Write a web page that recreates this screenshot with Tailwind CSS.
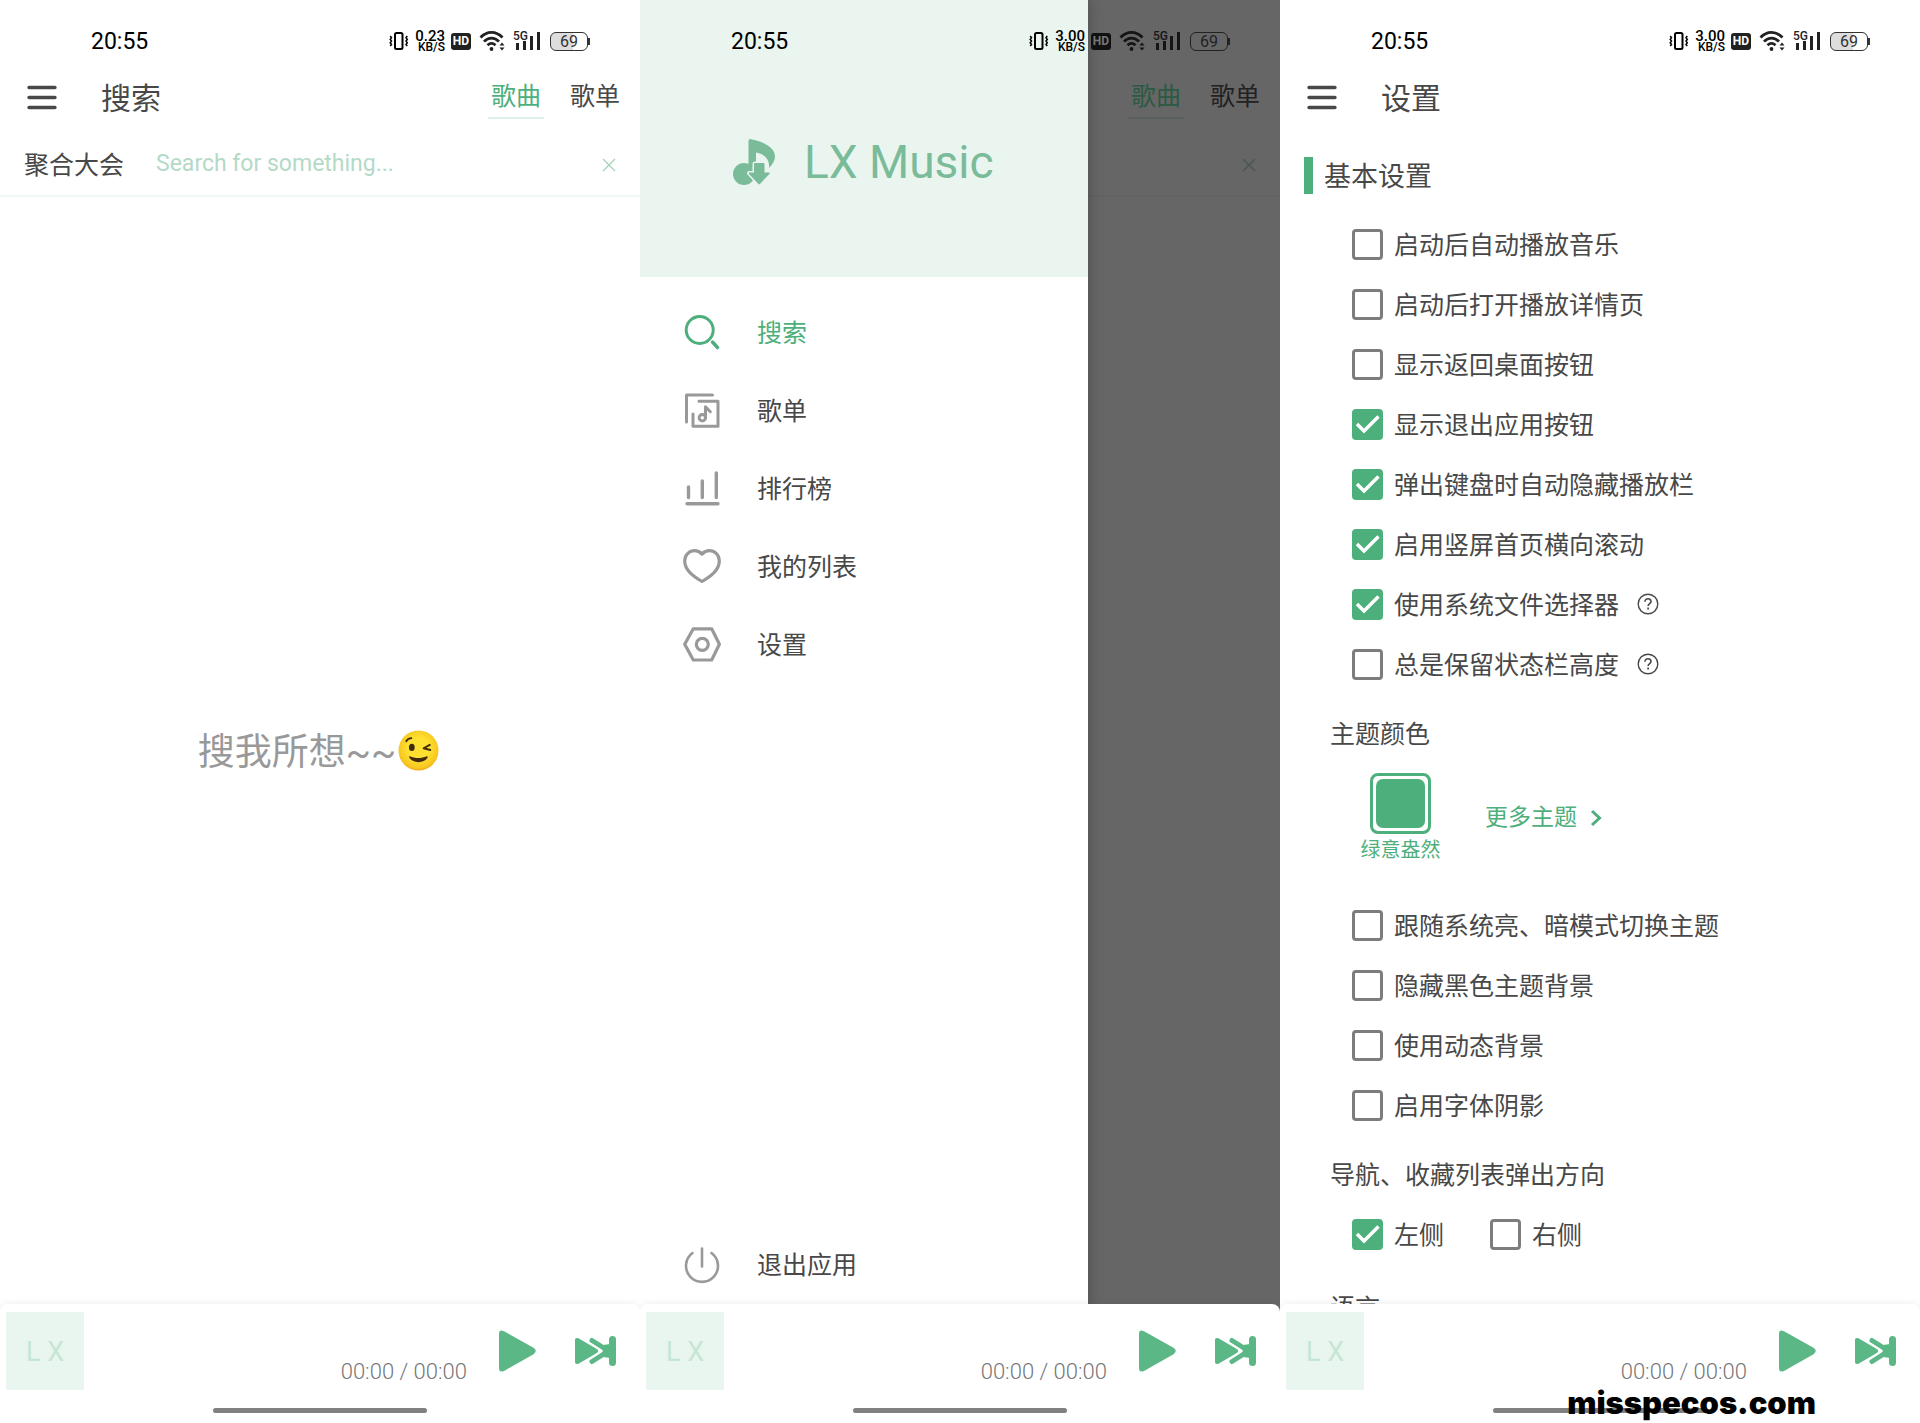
<!DOCTYPE html>
<html lang="zh-CN">
<head>
    <meta charset="UTF-8">
    <meta name="viewport" content="width=device-width, initial-scale=1.0">
    <title>LX Music</title>
    <script src="https://cdn.jsdelivr.net/npm/@tailwindcss/browser@4"></script>
</head>
<body class="bg-white text-[#484848] font-[Roboto,'Noto_Sans_CJK_SC',sans-serif]">

    <!-- Shared icons -->
    <svg class="hidden">
        <symbol id="vibrate" viewBox="0 0 20 20" fill="none" stroke="currentColor">
            <rect x="6" y="2" width="7.5" height="16" rx="1.5" stroke-width="2"/>
            <path d="M1.2 5l1.3 1.7-1.3 1.7 1.3 1.6-1.3 1.7 1.3 1.7-1.3 1.6M18.3 5L17 6.700l1.300 1.700-1.300 1.600 1.300 1.700-1.300 1.700 1.300 1.600" stroke-width="1.500"/>
        </symbol>
        <symbol id="wifi" viewBox="0 0 28 22">
            <g fill="none" stroke="currentColor" stroke-width="2.800">
                <path d="M1.500 7.500C8 .7 17 .7 23.500 7.500"/>
                <path d="M5 11.500c4.500-4.500 10.500-4.500 15 0"/>
                <path d="M8.500 15.300c2.500-2.400 5.500-2.400 8 0"/>
            </g>
            <circle cx="12.500" cy="19" r="1.900" fill="currentColor"/>
            <path d="M20.500 15.500h5L23 12.500zM20.500 17.500h5L23 20.500z" fill="currentColor"/>
        </symbol>
        <symbol id="menu" viewBox="0 0 30 26">
            <path d="M2 2.500h26M2 12.500h26M2 22.500h26" stroke="currentColor" stroke-width="3.400" stroke-linecap="round"/>
        </symbol>
        <symbol id="close" viewBox="0 0 14 14">
            <path d="M1 1l12 12M13 1L1 13" stroke="currentColor" stroke-width="1.300"/>
        </symbol>
        <symbol id="check" viewBox="0 0 31 31">
            <path d="M5 15l7 7L26.500 7.500" fill="none" stroke="white" stroke-width="3.400"/>
        </symbol>
        <symbol id="help" viewBox="0 0 22 22" fill="none" stroke="currentColor">
            <circle cx="11" cy="11" r="9.800" stroke-width="1.400"/>
            <path d="M8 8.700c0-1.900 1.300-3 3-3s3 1.100 3 2.700c0 2.100-2.900 2.300-2.900 4.600" stroke-width="1.600"/>
            <path d="M11.100 14.500v1.900" stroke-width="1.700"/>
        </symbol>
        <symbol id="play" viewBox="0 0 37 42">
            <path d="M0 4Q0-1 5 1.200L34.500 17.800Q39 21 34.500 24.200L5 41Q0 43 0 38z" fill="currentColor"/>
        </symbol>
        <symbol id="next" viewBox="0 0 41 30">
            <path d="M17 4.500L28 11.500Q33 15 28 18.500L17 25.500" fill="none" stroke="currentColor" stroke-width="5" stroke-linecap="round"/>
            <path d="M28 9l7-1v14l-7-1z" fill="currentColor"/>
            <path d="M0 4Q0 1 3.500 2.300L21 12.500Q25.500 15 21 17.500L3.500 27.700Q0 29 0 26z" fill="currentColor" stroke="white" stroke-width="3.200" paint-order="stroke"/>
            <rect x="34" y="0" width="7" height="30" rx="3.500" fill="currentColor"/>
        </symbol>
    </svg>

    <main class="grid grid-cols-3 h-screen overflow-hidden">

        <!-- Search -->
        <section class="flex flex-col overflow-hidden">
            <div class="flex items-center h-[66px] pt-4 pl-[91px] pr-[50px] text-black">
                <span class="text-[23px] pt-[2px] mr-auto">20:55</span>
                <svg class="size-5 mr-[6px]"><use href="#vibrate"/></svg>
                <div class="flex flex-col items-end w-[30px] mr-[6px] font-medium">
                    <span class="text-[15px] leading-[12px]">0.23</span>
                    <span class="text-[12px] leading-[11px]">KB/S</span>
                </div>
                <span class="w-5 mr-2 rounded-[3px] bg-[#222] text-white text-[12px] leading-[17px] font-bold text-center">HD</span>
                <svg class="w-7 h-[22px] mr-[6px] text-[#222]"><use href="#wifi"/></svg>
                <div class="relative flex items-end gap-[4px] h-[18px] pl-[3px] mr-[10px] text-[#222]">
                    <span class="absolute left-0 -top-[1px] text-[12px] leading-[10px] font-medium">5G</span>
                    <i class="w-[3px] h-[7px] bg-current"></i>
                    <i class="w-[3px] h-[9px] bg-current"></i>
                    <i class="w-[3px] h-[14px] bg-current"></i>
                    <i class="w-[3px] h-[18px] bg-current"></i>
                </div>
                <div class="flex items-center text-[#333]">
                    <span class="w-[38px] rounded-[6px] border-[1.5px] border-current bg-linear-to-r from-[#ddd] from-60% to-white to-60% text-[16px] leading-[17px] text-center">69</span>
                    <i class="w-[2px] h-[7px] bg-current"></i>
                </div>
            </div>
            <header class="flex items-center h-16 pl-[27px] pr-[20px]">
                <button aria-label="菜单" class="mr-[44px]"><svg class="w-[30px] h-[26px]"><use href="#menu"/></svg></button>
                <h1 class="pt-[2px] text-[30px] leading-[40px] mr-auto">搜索</h1>
                <button class="h-[41px] px-[3px] mr-[26px] border-b-2 border-[#dff1e7] text-[25px] leading-[38px] text-[#4daf7c]">歌曲</button>
                <button class="h-[41px] text-[25px] leading-[38px] border-b-2 border-transparent">歌单</button>
            </header>
            <div class="flex items-center h-[67px] pt-[4px] pl-[24px] pr-[24px] border-b-2 border-[#f1f7f4]">
                <button class="pt-[2px] text-[25px] leading-[34px] mr-[32px]">聚合大会</button>
                <input type="text" aria-label="搜索" placeholder="Search for something..." class="flex-1 min-w-0 text-[23px] placeholder:text-[#b4dac7] outline-none">
                <button aria-label="清除" class="text-[#a5d3bb]"><svg class="size-[14px]"><use href="#close"/></svg></button>
            </div>
            <div class="flex-1 min-h-0 flex items-center justify-center text-[#999]">
                <p class="pt-[4px] text-[37px] leading-[50px]">搜我所想~~</p>
                <svg viewBox="0 0 40 40" class="size-[41px] ml-[2px] mr-[3px]" role="img" aria-label="眨眼">
                    <defs>
                        <radialGradient id="face" cx=".5" cy=".45" r=".55">
                            <stop offset=".5" stop-color="#fde030"/>
                            <stop offset=".9" stop-color="#f8c61f"/>
                            <stop offset="1" stop-color="#efa71b"/>
                        </radialGradient>
                    </defs>
                    <circle cx="20" cy="20" r="19.500" fill="url(#face)"/>
                    <ellipse cx="13.500" cy="17" rx="2.800" ry="3.500" fill="#422b0d"/>
                    <g fill="none" stroke="#422b0d" stroke-linecap="round" stroke-linejoin="round">
                        <path d="M8 11c1-1.800 3-3 5-3" stroke-width="1.800"/>
                        <path d="M31 14.500l-6 3.300 6.500 1.700" stroke-width="1.900"/>
                    </g>
                    <path d="M11.500 25.500c5 2.300 11.500 2.300 16.500 0 1 0 1.200.8.800 1.600-3.500 5.700-14 5.700-17.700 0-.5-.9-.3-1.600.4-1.600z" fill="#422b0d"/>
                </svg>
            </div>
            <footer class="h-[119px] rounded-t-[8px] bg-white shadow-[0_0_8px_rgba(0,0,0,0.08)]">
                <div class="flex items-center h-[94px] pl-[6px] pr-[24px] text-[#5cb787]">
                    <div class="size-[78px] rounded-[2px] bg-[#e9f5ef] text-[#c5e6d4] text-[27px] leading-[80px] text-center">L X</div>
                    <span class="ml-auto mr-[32px] self-end mb-[14px] text-[22px] leading-[24px] font-light text-[#777]">00:00 / 00:00</span>
                    <button aria-label="播放" class="mr-[39px]"><svg class="w-[37px] h-[42px]"><use href="#play"/></svg></button>
                    <button aria-label="下一首"><svg class="w-[41px] h-[30px]"><use href="#next"/></svg></button>
                </div>
                <div class="w-1/3 h-[5px] mx-auto mt-[10px] rounded-full bg-[#808080]"></div>
            </footer>
        </section>

        <!-- Drawer -->
        <section class="relative flex flex-col overflow-hidden bg-[#666]">
            <div class="relative z-20 flex items-center h-[66px] pt-4 pl-[91px] pr-[50px] text-black">
                <span class="text-[23px] pt-[2px] mr-auto">20:55</span>
                <svg class="size-5 mr-[6px]"><use href="#vibrate"/></svg>
                <div class="flex flex-col items-end w-[30px] mr-[6px] font-medium">
                    <span class="text-[15px] leading-[12px]">3.00</span>
                    <span class="text-[12px] leading-[11px]">KB/S</span>
                </div>
                <span class="w-5 mr-2 rounded-[3px] bg-[#111] text-[#777] text-[12px] leading-[17px] font-bold text-center">HD</span>
                <svg class="w-7 h-[22px] mr-[6px] text-[#151515]"><use href="#wifi"/></svg>
                <div class="relative flex items-end gap-[4px] h-[18px] pl-[3px] mr-[10px] text-[#151515]">
                    <span class="absolute left-0 -top-[1px] text-[12px] leading-[10px] font-medium">5G</span>
                    <i class="w-[3px] h-[7px] bg-current"></i>
                    <i class="w-[3px] h-[9px] bg-current"></i>
                    <i class="w-[3px] h-[14px] bg-current"></i>
                    <i class="w-[3px] h-[18px] bg-current"></i>
                </div>
                <div class="flex items-center text-[#222]">
                    <span class="w-[38px] rounded-[6px] border-[1.5px] border-current text-[16px] leading-[17px] text-center">69</span>
                    <i class="w-[2px] h-[7px] bg-current"></i>
                </div>
            </div>
            <div class="flex items-center justify-end h-16 pr-[20px] text-[#222]">
                <button class="h-[41px] px-[3px] mr-[26px] border-b-2 border-[#5a615d] text-[25px] leading-[38px] text-[#2c5a43]">歌曲</button>
                <button class="h-[41px] text-[25px] leading-[38px] border-b-2 border-transparent">歌单</button>
            </div>
            <div class="flex items-center justify-end h-[67px] pt-[4px] pr-[24px] border-b-2 border-[#616462]">
                <button aria-label="清除" class="text-[#44584d]"><svg class="size-[14px]"><use href="#close"/></svg></button>
            </div>
            <div class="flex-1"></div>

            <aside class="absolute left-0 top-0 bottom-[111px] w-[70%] z-10 flex flex-col pb-[8px] bg-white shadow-[0_0_14px_rgba(0,0,0,0.25)]">
                <div class="flex items-center h-[277px] pt-[47px] pl-[93px] bg-[#eaf5ef] text-[#7abb99]">
                    <svg viewBox="0 0 43 46" class="w-[43px] h-[46px] mr-[28px]">
                        <path d="M15.500 24V2Q15.500-.3 18 .2C32 3 42 9 42 17.500c0 4-2.500 8-6 11.500 1-8-4-14-13-15.500V35H15.500z" fill="currentColor"/>
                        <circle cx="11" cy="35" r="11" fill="currentColor"/>
                        <path d="M22 24h8.500q1 0 1 1v8.500H36q1.500 0 .6 1.200l-9.400 10q-1 1-2 0l-9.400-10q-.9-1.200.6-1.200H21V25q0-1 1-1z" fill="currentColor" stroke="#eaf5ef" stroke-width="3" paint-order="stroke"/>
                    </svg>
                    <span class="text-[46px] leading-[54px]">LX Music</span>
                </div>
                <nav class="flex-1 flex flex-col pt-[17px] text-[25px] leading-[34px]">
                    <a href="#search" class="flex items-center gap-[36px] h-[78px] pt-[2px] pl-[43px] text-[#4daf7c]">
                        <svg viewBox="0 0 38 38" class="size-[38px] mb-[2px]" fill="none" stroke="currentColor" stroke-width="3" stroke-linecap="round">
                            <circle cx="16.700" cy="16" r="13.500"/>
                            <path d="M29.500 28l5 5.500" stroke-width="3.400"/>
                        </svg>
                        搜索
                    </a>
                    <a href="#songlist" class="flex items-center gap-[36px] h-[78px] pt-[2px] pl-[43px]">
                        <svg viewBox="0 0 38 38" class="size-[38px] mb-[2px] text-[#999]" fill="none" stroke="currentColor" stroke-width="3" stroke-linecap="round" stroke-linejoin="round">
                            <path d="M3.500 30V3h26"/>
                            <path d="M16 9.300h19v25H10V22"/>
                            <circle cx="19.300" cy="25.700" r="3.200"/>
                            <path d="M22.500 25.700v-11l4.800 5"/>
                        </svg>
                        歌单
                    </a>
                    <a href="#leaderboard" class="flex items-center gap-[36px] h-[78px] pt-[2px] pl-[43px]">
                        <svg viewBox="0 0 38 38" class="size-[38px] mb-[2px] text-[#999]" fill="none" stroke="currentColor" stroke-width="3.400" stroke-linecap="round">
                            <path d="M5.500 17v10.500M19.300 11v16.500M33.300 3v24.500M4 33.700h31"/>
                        </svg>
                        排行榜
                    </a>
                    <a href="#mylist" class="flex items-center gap-[36px] h-[78px] pt-[2px] pl-[43px]">
                        <svg viewBox="0 0 38 38" class="size-[38px] mb-[2px] text-[#999]" fill="none" stroke="currentColor" stroke-width="3.200" stroke-linejoin="round">
                            <path d="M19 33.500C10 28 1.700 22 1.700 13c0-6.500 5-10.300 10-10.300 3.300 0 5.300 1.300 7.300 3.300 2-2 4-3.300 7.300-3.300 5 0 10 3.800 10 10.300 0 9-8.300 15-17.300 20.500z"/>
                        </svg>
                        我的列表
                    </a>
                    <a href="#setting" class="flex items-center gap-[36px] h-[78px] pt-[2px] pl-[43px]">
                        <svg viewBox="0 0 38 38" class="size-[38px] mb-[2px] text-[#999]" fill="none" stroke="currentColor" stroke-width="3.200" stroke-linejoin="round">
                            <path d="M1.700 18.200L10.300 2.800h18.400l7.700 15.400-7.700 15.800H10.300z"/>
                            <circle cx="19.300" cy="18.300" r="6"/>
                        </svg>
                        设置
                    </a>
                    <button class="flex items-center gap-[36px] h-[78px] mt-auto pt-[2px] pl-[43px]">
                        <svg viewBox="0 0 38 38" class="size-[38px] mb-[2px] text-[#999]" fill="none" stroke="currentColor" stroke-width="2.600" stroke-linecap="round">
                            <path d="M19 2.500v18"/>
                            <path d="M9.500 7a16 16 0 1 0 19 0"/>
                        </svg>
                        退出应用
                    </button>
                </nav>
            </aside>

            <footer class="relative z-10 h-[119px] rounded-t-[8px] bg-white shadow-[0_0_8px_rgba(0,0,0,0.08)]">
                <div class="flex items-center h-[94px] pl-[6px] pr-[24px] text-[#5cb787]">
                    <div class="size-[78px] rounded-[2px] bg-[#e9f5ef] text-[#c5e6d4] text-[27px] leading-[80px] text-center">L X</div>
                    <span class="ml-auto mr-[32px] self-end mb-[14px] text-[22px] leading-[24px] font-light text-[#777]">00:00 / 00:00</span>
                    <button aria-label="播放" class="mr-[39px]"><svg class="w-[37px] h-[42px]"><use href="#play"/></svg></button>
                    <button aria-label="下一首"><svg class="w-[41px] h-[30px]"><use href="#next"/></svg></button>
                </div>
                <div class="w-1/3 h-[5px] mx-auto mt-[10px] rounded-full bg-[#808080]"></div>
            </footer>
        </section>

        <!-- Settings -->
        <section class="flex flex-col overflow-hidden">
            <div class="flex items-center h-[66px] pt-4 pl-[91px] pr-[50px] text-black">
                <span class="text-[23px] pt-[2px] mr-auto">20:55</span>
                <svg class="size-5 mr-[6px]"><use href="#vibrate"/></svg>
                <div class="flex flex-col items-end w-[30px] mr-[6px] font-medium">
                    <span class="text-[15px] leading-[12px]">3.00</span>
                    <span class="text-[12px] leading-[11px]">KB/S</span>
                </div>
                <span class="w-5 mr-2 rounded-[3px] bg-[#222] text-white text-[12px] leading-[17px] font-bold text-center">HD</span>
                <svg class="w-7 h-[22px] mr-[6px] text-[#222]"><use href="#wifi"/></svg>
                <div class="relative flex items-end gap-[4px] h-[18px] pl-[3px] mr-[10px] text-[#222]">
                    <span class="absolute left-0 -top-[1px] text-[12px] leading-[10px] font-medium">5G</span>
                    <i class="w-[3px] h-[7px] bg-current"></i>
                    <i class="w-[3px] h-[9px] bg-current"></i>
                    <i class="w-[3px] h-[14px] bg-current"></i>
                    <i class="w-[3px] h-[18px] bg-current"></i>
                </div>
                <div class="flex items-center text-[#333]">
                    <span class="w-[38px] rounded-[6px] border-[1.5px] border-current bg-linear-to-r from-[#ddd] from-60% to-white to-60% text-[16px] leading-[17px] text-center">69</span>
                    <i class="w-[2px] h-[7px] bg-current"></i>
                </div>
            </div>
            <header class="flex items-center h-16 pl-[27px] pr-[20px]">
                <button aria-label="菜单" class="mr-[44px]"><svg class="w-[30px] h-[26px]"><use href="#menu"/></svg></button>
                <h1 class="pt-[2px] text-[30px] leading-[40px]">设置</h1>
            </header>

            <div class="flex-1 min-h-0 overflow-hidden pt-[27px] pl-[24px] text-[25px] leading-[34px]">
                <h2 class="h-[37px] pl-[11px] border-l-[9px] border-[#4daf7c] text-[27px] leading-[40px]">基本设置</h2>

                <div class="mt-[20px] pl-[48px]">
                    <label class="flex items-center h-[60px] pt-[4px]">
                        <span class="grid mr-[11px] mb-[4px]">
                            <input type="checkbox" class="peer [grid-area:1/1] appearance-none size-[31px] rounded-[4px] border-3 border-[#7d7d7d] checked:bg-[#4daf7c] checked:border-[#4daf7c]">
                            <svg class="[grid-area:1/1] size-[31px] hidden peer-checked:block pointer-events-none"><use href="#check"/></svg>
                        </span>
                        启动后自动播放音乐
                    </label>
                    <label class="flex items-center h-[60px] pt-[4px]">
                        <span class="grid mr-[11px] mb-[4px]">
                            <input type="checkbox" class="peer [grid-area:1/1] appearance-none size-[31px] rounded-[4px] border-3 border-[#7d7d7d] checked:bg-[#4daf7c] checked:border-[#4daf7c]">
                            <svg class="[grid-area:1/1] size-[31px] hidden peer-checked:block pointer-events-none"><use href="#check"/></svg>
                        </span>
                        启动后打开播放详情页
                    </label>
                    <label class="flex items-center h-[60px] pt-[4px]">
                        <span class="grid mr-[11px] mb-[4px]">
                            <input type="checkbox" class="peer [grid-area:1/1] appearance-none size-[31px] rounded-[4px] border-3 border-[#7d7d7d] checked:bg-[#4daf7c] checked:border-[#4daf7c]">
                            <svg class="[grid-area:1/1] size-[31px] hidden peer-checked:block pointer-events-none"><use href="#check"/></svg>
                        </span>
                        显示返回桌面按钮
                    </label>
                    <label class="flex items-center h-[60px] pt-[4px]">
                        <span class="grid mr-[11px] mb-[4px]">
                            <input type="checkbox" checked class="peer [grid-area:1/1] appearance-none size-[31px] rounded-[4px] border-3 border-[#7d7d7d] checked:bg-[#4daf7c] checked:border-[#4daf7c]">
                            <svg class="[grid-area:1/1] size-[31px] hidden peer-checked:block pointer-events-none"><use href="#check"/></svg>
                        </span>
                        显示退出应用按钮
                    </label>
                    <label class="flex items-center h-[60px] pt-[4px]">
                        <span class="grid mr-[11px] mb-[4px]">
                            <input type="checkbox" checked class="peer [grid-area:1/1] appearance-none size-[31px] rounded-[4px] border-3 border-[#7d7d7d] checked:bg-[#4daf7c] checked:border-[#4daf7c]">
                            <svg class="[grid-area:1/1] size-[31px] hidden peer-checked:block pointer-events-none"><use href="#check"/></svg>
                        </span>
                        弹出键盘时自动隐藏播放栏
                    </label>
                    <label class="flex items-center h-[60px] pt-[4px]">
                        <span class="grid mr-[11px] mb-[4px]">
                            <input type="checkbox" checked class="peer [grid-area:1/1] appearance-none size-[31px] rounded-[4px] border-3 border-[#7d7d7d] checked:bg-[#4daf7c] checked:border-[#4daf7c]">
                            <svg class="[grid-area:1/1] size-[31px] hidden peer-checked:block pointer-events-none"><use href="#check"/></svg>
                        </span>
                        启用竖屏首页横向滚动
                    </label>
                    <div class="flex items-center h-[60px]">
                        <label class="flex items-center h-[60px] pt-[4px]">
                            <span class="grid mr-[11px] mb-[4px]">
                                <input type="checkbox" checked class="peer [grid-area:1/1] appearance-none size-[31px] rounded-[4px] border-3 border-[#7d7d7d] checked:bg-[#4daf7c] checked:border-[#4daf7c]">
                                <svg class="[grid-area:1/1] size-[31px] hidden peer-checked:block pointer-events-none"><use href="#check"/></svg>
                            </span>
                            使用系统文件选择器
                        </label>
                        <button aria-label="帮助" class="ml-[18px]"><svg class="size-[22px]"><use href="#help"/></svg></button>
                    </div>
                    <div class="flex items-center h-[60px]">
                        <label class="flex items-center h-[60px] pt-[4px]">
                            <span class="grid mr-[11px] mb-[4px]">
                                <input type="checkbox" class="peer [grid-area:1/1] appearance-none size-[31px] rounded-[4px] border-3 border-[#7d7d7d] checked:bg-[#4daf7c] checked:border-[#4daf7c]">
                                <svg class="[grid-area:1/1] size-[31px] hidden peer-checked:block pointer-events-none"><use href="#check"/></svg>
                            </span>
                            总是保留状态栏高度
                        </label>
                        <button aria-label="帮助" class="ml-[18px]"><svg class="size-[22px]"><use href="#help"/></svg></button>
                    </div>
                </div>

                <h3 class="mt-[11px] pl-[26px] leading-[60px]">主题颜色</h3>
                <div class="flex items-center mt-[8px] pl-[56px] text-[#4daf7c]">
                    <button class="flex flex-col items-center gap-[4px] w-[81px]">
                        <span class="size-[61px] p-[3px] rounded-[8px] border-3 border-[#4daf7c]"><span class="block size-full rounded-[7px] bg-[#4daf7c]"></span></span>
                        <span class="text-[20px] leading-[24px] whitespace-nowrap">绿意盎然</span>
                    </button>
                    <a href="#themes" class="flex items-center gap-[13px] ml-[44px] text-[23px] leading-[30px]">
                        更多主题
                        <svg viewBox="0 0 12 18" class="w-[12px] h-[18px]"><path d="M2 2l7.500 7L2 16" fill="none" stroke="currentColor" stroke-width="3"/></svg>
                    </a>
                </div>

                <div class="mt-[33px] pl-[48px]">
                    <label class="flex items-center h-[60px] pt-[4px]">
                        <span class="grid mr-[11px] mb-[4px]">
                            <input type="checkbox" class="peer [grid-area:1/1] appearance-none size-[31px] rounded-[4px] border-3 border-[#7d7d7d] checked:bg-[#4daf7c] checked:border-[#4daf7c]">
                            <svg class="[grid-area:1/1] size-[31px] hidden peer-checked:block pointer-events-none"><use href="#check"/></svg>
                        </span>
                        跟随系统亮、暗模式切换主题
                    </label>
                    <label class="flex items-center h-[60px] pt-[4px]">
                        <span class="grid mr-[11px] mb-[4px]">
                            <input type="checkbox" class="peer [grid-area:1/1] appearance-none size-[31px] rounded-[4px] border-3 border-[#7d7d7d] checked:bg-[#4daf7c] checked:border-[#4daf7c]">
                            <svg class="[grid-area:1/1] size-[31px] hidden peer-checked:block pointer-events-none"><use href="#check"/></svg>
                        </span>
                        隐藏黑色主题背景
                    </label>
                    <label class="flex items-center h-[60px] pt-[4px]">
                        <span class="grid mr-[11px] mb-[4px]">
                            <input type="checkbox" class="peer [grid-area:1/1] appearance-none size-[31px] rounded-[4px] border-3 border-[#7d7d7d] checked:bg-[#4daf7c] checked:border-[#4daf7c]">
                            <svg class="[grid-area:1/1] size-[31px] hidden peer-checked:block pointer-events-none"><use href="#check"/></svg>
                        </span>
                        使用动态背景
                    </label>
                    <label class="flex items-center h-[60px] pt-[4px]">
                        <span class="grid mr-[11px] mb-[4px]">
                            <input type="checkbox" class="peer [grid-area:1/1] appearance-none size-[31px] rounded-[4px] border-3 border-[#7d7d7d] checked:bg-[#4daf7c] checked:border-[#4daf7c]">
                            <svg class="[grid-area:1/1] size-[31px] hidden peer-checked:block pointer-events-none"><use href="#check"/></svg>
                        </span>
                        启用字体阴影
                    </label>
                </div>

                <h3 class="mt-[11px] pl-[26px] leading-[60px]">导航、收藏列表弹出方向</h3>
                <div class="flex gap-[46px] -mt-[2px] pl-[48px]">
                    <label class="flex items-center h-[60px] pt-[4px]">
                        <span class="grid mr-[11px] mb-[4px]">
                            <input type="checkbox" checked class="peer [grid-area:1/1] appearance-none size-[31px] rounded-[4px] border-3 border-[#7d7d7d] checked:bg-[#4daf7c] checked:border-[#4daf7c]">
                            <svg class="[grid-area:1/1] size-[31px] hidden peer-checked:block pointer-events-none"><use href="#check"/></svg>
                        </span>
                        左侧
                    </label>
                    <label class="flex items-center h-[60px] pt-[4px]">
                        <span class="grid mr-[11px] mb-[4px]">
                            <input type="checkbox" class="peer [grid-area:1/1] appearance-none size-[31px] rounded-[4px] border-3 border-[#7d7d7d] checked:bg-[#4daf7c] checked:border-[#4daf7c]">
                            <svg class="[grid-area:1/1] size-[31px] hidden peer-checked:block pointer-events-none"><use href="#check"/></svg>
                        </span>
                        右侧
                    </label>
                </div>
                <h3 class="mt-[15px] pl-[26px] leading-[60px]">语言</h3>
            </div>

            <footer class="relative h-[119px] rounded-t-[8px] bg-white shadow-[0_0_8px_rgba(0,0,0,0.08)]">
                <div class="flex items-center h-[94px] pl-[6px] pr-[24px] text-[#5cb787]">
                    <div class="size-[78px] rounded-[2px] bg-[#e9f5ef] text-[#c5e6d4] text-[27px] leading-[80px] text-center">L X</div>
                    <span class="ml-auto mr-[32px] self-end mb-[14px] text-[22px] leading-[24px] font-light text-[#777]">00:00 / 00:00</span>
                    <button aria-label="播放" class="mr-[39px]"><svg class="w-[37px] h-[42px]"><use href="#play"/></svg></button>
                    <button aria-label="下一首"><svg class="w-[41px] h-[30px]"><use href="#next"/></svg></button>
                </div>
                <div class="w-1/3 h-[5px] mx-auto mt-[10px] rounded-full bg-[#808080]"></div>
                <span class="absolute right-[104px] bottom-[2px] font-[Inter,sans-serif] font-black text-[31px] leading-[36px] text-black">misspecos.com</span>
            </footer>
        </section>
    </main>
</body>
</html>
